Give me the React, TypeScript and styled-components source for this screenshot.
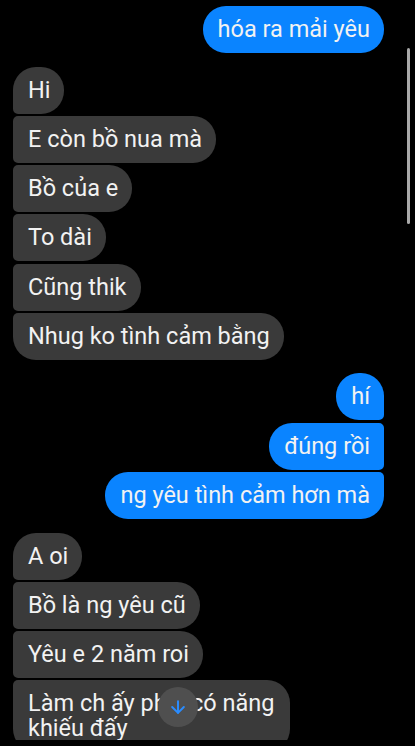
import React from "react";
import styled, { createGlobalStyle, css } from "styled-components";
import { ArrowDown } from "lucide-react";

const Global = createGlobalStyle`
  html, body { margin: 0; padding: 0; background: #000; }
  body { font-family: Roboto, "Noto Sans", "Liberation Sans", sans-serif; overflow: hidden; }
`;

const Viewport = styled.div`
  position: relative;
  height: 740px;
  overflow: hidden;
  background: #000;
`;

const Thread = styled.div`
  display: flex;
  flex-direction: column;
  gap: 13.5px;
  padding: 6px 31px 0 13px;
`;

const Group = styled.div<{ $mine?: boolean }>`
  display: flex;
  flex-direction: column;
  gap: 2.3px;
  align-items: ${(p) => (p.$mine ? "flex-end" : "flex-start")};
`;

type Pos = "single" | "first" | "middle" | "last";

const big = 23;
const small = 5;

const radius = (mine: boolean, pos: Pos) => {
  const top = pos === "single" || pos === "first" ? big : small;
  const bottom = pos === "single" || pos === "last" ? big : small;
  return mine
    ? css`border-radius: ${big}px ${top}px ${bottom}px ${big}px;`
    : css`border-radius: ${top}px ${big}px ${big}px ${bottom}px;`;
};

const Bubble = styled.div<{ $mine?: boolean; $pos: Pos }>`
  box-sizing: border-box;
  max-width: ${(p) => (p.$mine ? "290px" : "277px")};
  padding: 11px 14px 11px 15px;
  font-size: 23.5px;
  line-height: 25px;
  color: #f2f2f2;
  background: ${(p) => (p.$mine ? "#0a84ff" : "#3a3a3a")};
  ${(p) => radius(!!p.$mine, p.$pos)}
`;

const ScrollThumb = styled.div`
  position: absolute;
  left: 407px;
  top: 48px;
  width: 3px;
  height: 176px;
  border-radius: 2px;
  background: #a9a9a9;
`;

const JumpButton = styled.div`
  position: absolute;
  left: 158px;
  top: 687px;
  width: 40px;
  height: 40px;
  border-radius: 50%;
  background: #4f4f4f;
  display: flex;
  align-items: center;
  justify-content: center;
  color: #2a8cff;
`;

const groups: { mine: boolean; msgs: string[] }[] = [
  { mine: true, msgs: ["hóa ra mải yêu"] },
  {
    mine: false,
    msgs: ["Hi", "E còn bồ nua mà", "Bồ của e", "To dài", "Cũng thik", "Nhug ko tình cảm bằng"],
  },
  { mine: true, msgs: ["hí", "đúng rồi", "ng yêu tình cảm hơn mà"] },
  {
    mine: false,
    msgs: ["A oi", "Bồ là ng yêu cũ", "Yêu e 2 năm roi", "Làm ch ấy phải có năng khiếu đấy"],
  },
];

const posOf = (i: number, n: number): Pos =>
  n === 1 ? "single" : i === 0 ? "first" : i === n - 1 ? "last" : "middle";

export default function App() {
  return (
    <Viewport>
      <Global />
      <Thread>
        {groups.map((g, gi) => (
          <Group key={gi} $mine={g.mine}>
            {g.msgs.map((m, i) => (
              <Bubble key={i} $mine={g.mine} $pos={posOf(i, g.msgs.length)}>
                {m}
              </Bubble>
            ))}
          </Group>
        ))}
      </Thread>
      <ScrollThumb />
      <JumpButton>
        <ArrowDown size={20} strokeWidth={2.4} />
      </JumpButton>
    </Viewport>
  );
}
